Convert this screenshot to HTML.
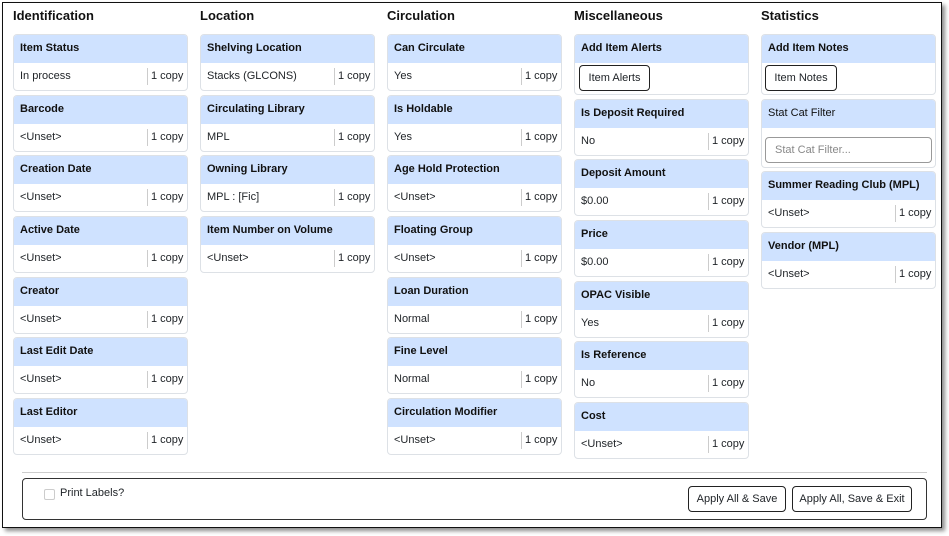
<!DOCTYPE html>
<html><head><meta charset="utf-8"><style>
*{box-sizing:border-box;margin:0;padding:0}
body{width:949px;height:536px;background:#fff;font-family:"Liberation Sans",sans-serif;color:#212529;position:relative;overflow:hidden}
.frame{position:absolute;left:2px;top:2px;width:940px;height:526px;border:1.5px solid #111;box-shadow:3px 3px 4px rgba(0,0,0,.45)}
.col{position:absolute;top:0;width:175px}
.col h2{font-size:13px;font-weight:bold;height:34px;line-height:31px;color:#111}
.card{border:1px solid #dde1e6;border-radius:4px;margin-bottom:3.7px;overflow:hidden;background:#fff}
.hd{background:#cfe2ff;height:28px;line-height:27px;padding-left:6px;font-size:11px;font-weight:bold;color:#111}
.bd{height:27px;position:relative;font-size:11px;line-height:26px;padding-left:6px}
.bd .c{position:absolute;left:133px;top:5px;height:17px;border-left:1px solid #ccc;line-height:17px;padding-left:3px}
.btn{display:inline-block;border:1px solid #222;border-radius:4px;font-size:11px;background:#fff}
</style></head><body>
<div class="frame"></div>

<div class="col" style="left:13px">
<h2>Identification</h2>
<div class="card"><div class="hd">Item Status</div><div class="bd">In process<span class="c">1 copy</span></div></div>
<div class="card"><div class="hd">Barcode</div><div class="bd">&lt;Unset&gt;<span class="c">1 copy</span></div></div>
<div class="card"><div class="hd">Creation Date</div><div class="bd">&lt;Unset&gt;<span class="c">1 copy</span></div></div>
<div class="card"><div class="hd">Active Date</div><div class="bd">&lt;Unset&gt;<span class="c">1 copy</span></div></div>
<div class="card"><div class="hd">Creator</div><div class="bd">&lt;Unset&gt;<span class="c">1 copy</span></div></div>
<div class="card"><div class="hd">Last Edit Date</div><div class="bd">&lt;Unset&gt;<span class="c">1 copy</span></div></div>
<div class="card"><div class="hd">Last Editor</div><div class="bd">&lt;Unset&gt;<span class="c">1 copy</span></div></div>
</div>

<div class="col" style="left:200px">
<h2>Location</h2>
<div class="card"><div class="hd">Shelving Location</div><div class="bd">Stacks (GLCONS)<span class="c">1 copy</span></div></div>
<div class="card"><div class="hd">Circulating Library</div><div class="bd">MPL<span class="c">1 copy</span></div></div>
<div class="card"><div class="hd">Owning Library</div><div class="bd">MPL : [Fic]<span class="c">1 copy</span></div></div>
<div class="card"><div class="hd">Item Number on Volume</div><div class="bd">&lt;Unset&gt;<span class="c">1 copy</span></div></div>
</div>

<div class="col" style="left:387px">
<h2>Circulation</h2>
<div class="card"><div class="hd">Can Circulate</div><div class="bd">Yes<span class="c">1 copy</span></div></div>
<div class="card"><div class="hd">Is Holdable</div><div class="bd">Yes<span class="c">1 copy</span></div></div>
<div class="card"><div class="hd">Age Hold Protection</div><div class="bd">&lt;Unset&gt;<span class="c">1 copy</span></div></div>
<div class="card"><div class="hd">Floating Group</div><div class="bd">&lt;Unset&gt;<span class="c">1 copy</span></div></div>
<div class="card"><div class="hd">Loan Duration</div><div class="bd">Normal<span class="c">1 copy</span></div></div>
<div class="card"><div class="hd">Fine Level</div><div class="bd">Normal<span class="c">1 copy</span></div></div>
<div class="card"><div class="hd">Circulation Modifier</div><div class="bd">&lt;Unset&gt;<span class="c">1 copy</span></div></div>
</div>

<div class="col" style="left:574px">
<h2>Miscellaneous</h2>
<div class="card"><div class="hd">Add Item Alerts</div><div class="bd" style="height:31px;padding-left:4px"><span class="btn" style="width:71px;height:26px;line-height:24px;text-align:center;margin-top:2px">Item Alerts</span></div></div>
<div class="card"><div class="hd">Is Deposit Required</div><div class="bd">No<span class="c">1 copy</span></div></div>
<div class="card"><div class="hd">Deposit Amount</div><div class="bd">$0.00<span class="c">1 copy</span></div></div>
<div class="card"><div class="hd">Price</div><div class="bd">$0.00<span class="c">1 copy</span></div></div>
<div class="card"><div class="hd">OPAC Visible</div><div class="bd">Yes<span class="c">1 copy</span></div></div>
<div class="card"><div class="hd">Is Reference</div><div class="bd">No<span class="c">1 copy</span></div></div>
<div class="card"><div class="hd">Cost</div><div class="bd">&lt;Unset&gt;<span class="c">1 copy</span></div></div>
</div>

<div class="col" style="left:761px">
<h2>Statistics</h2>
<div class="card"><div class="hd">Add Item Notes</div><div class="bd" style="height:31px;padding-left:3px"><span class="btn" style="width:72px;height:26px;line-height:24px;text-align:center;margin-top:2px">Item Notes</span></div></div>
<div class="card"><div class="hd" style="font-weight:normal;height:28px">Stat Cat Filter</div><div class="bd" style="height:39px;padding:9px 3px 0"><div style="border:1px solid #999;border-radius:4px;height:26px;line-height:24px;padding-left:9px;color:#888">Stat Cat Filter...</div></div></div>
<div class="card"><div class="hd">Summer Reading Club (MPL)</div><div class="bd">&lt;Unset&gt;<span class="c">1 copy</span></div></div>
<div class="card"><div class="hd">Vendor (MPL)</div><div class="bd">&lt;Unset&gt;<span class="c">1 copy</span></div></div>
</div>

<div style="position:absolute;left:22px;top:472px;width:905px;border-top:1px solid #ccc"></div>
<div style="position:absolute;left:22px;top:478px;width:905px;height:42px;border:1px solid #333;border-radius:4px">
<span style="position:absolute;left:21px;top:10px;width:11px;height:11px;border:1px solid #ccc;border-radius:2px"></span>
<span style="position:absolute;left:37px;top:8px;font-size:11px">Print Labels?</span>
<span class="btn" style="position:absolute;left:665px;top:7px;width:98px;height:26px;line-height:24px;text-align:center">Apply All &amp; Save</span>
<span class="btn" style="position:absolute;left:769px;top:7px;width:120px;height:26px;line-height:24px;text-align:center">Apply All, Save &amp; Exit</span>
</div>
</body></html>
